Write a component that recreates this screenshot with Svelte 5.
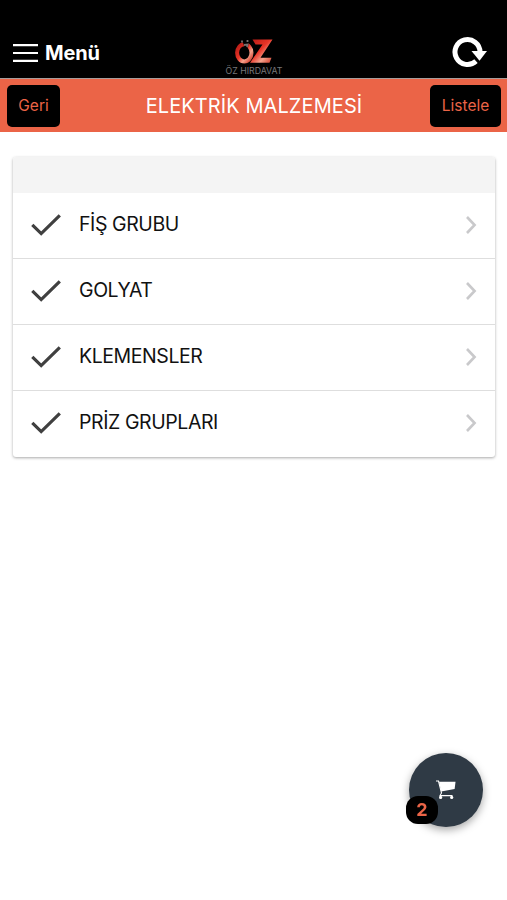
<script>
  const groups = ['FİŞ GRUBU', 'GOLYAT', 'KLEMENSLER', 'PRİZ GRUPLARI'];
  let cartCount = 2;
</script>

<div class="page">
  <header class="topbar">
    <button class="menu-btn">
      <svg width="26" height="20" viewBox="0 0 26 20" fill="none" stroke="#fff" stroke-width="2.2">
        <path d="M0 2.2 H25 M0 10 H25 M0 17.8 H25"/>
      </svg>
      <span>Menü</span>
    </button>
    <svg class="logo" width="64" height="44" viewBox="0 0 64 44" role="img" aria-label="Öz Hırdavat">
      <defs>
        <linearGradient id="red" x1="0" y1="0" x2="1" y2="1">
          <stop offset="0" stop-color="#b51a15"/>
          <stop offset="0.45" stop-color="#e93527"/>
          <stop offset="0.7" stop-color="#f3a28c"/>
          <stop offset="1" stop-color="#cf3222"/>
        </linearGradient>
      </defs>
      <ellipse cx="22.3" cy="18.8" rx="7.2" ry="8.6" fill="none" stroke="url(#red)" stroke-width="4"/>
      <path d="M20 5.5 L27 5 L26 13.5 L22.5 13.5 Z" fill="#000"/>
      <path d="M20 6.5 V8.5 M25.5 6 V8 M22 11 L25.5 10.5 L25 13" stroke="#77706f" stroke-width="1.8" fill="none"/>
      <path d="M30.5 5.5 H50.5 L38.5 23.8 H49.5 L47.5 28.8 H28 L40.5 10.5 H33.5 Z" fill="url(#red)"/>
      <text x="3.5" y="39.5" textLength="57" lengthAdjust="spacingAndGlyphs">ÖZ HIRDAVAT</text>
    </svg>
    <button class="refresh-btn" aria-label="Yenile">
      <svg width="36" height="34" viewBox="0 0 36 34">
        <path d="M29 17 A12.5 12.5 0 1 0 25 26.2" fill="none" stroke="#fff" stroke-width="5"/>
        <path d="M20.5 16 H36 L28.5 25.8 Z" fill="#fff"/>
      </svg>
    </button>
  </header>

  <div class="titlebar">
    <button class="action back">Geri</button>
    <h1>ELEKTRİK MALZEMESİ</h1>
    <button class="action list-btn">Listele</button>
  </div>

  <main class="card">
    <div class="card-header"></div>
    <ul>
      {#each groups as group}
        <li>
          <svg class="check" width="30" height="24" viewBox="0 0 30 24" fill="none" stroke="#404040" stroke-width="3.2">
            <path d="M1.3 11.8 L10.2 20.6 L28.8 2.3"/>
          </svg>
          <span class="name">{group}</span>
          <svg class="chevron" width="12" height="20" viewBox="0 0 12 20" fill="none" stroke="#c9c9cb" stroke-width="2.6">
            <path d="M2 2 L9.6 10 L2 18"/>
          </svg>
        </li>
      {/each}
    </ul>
  </main>

  <button class="cart" aria-label="Sepet">
    <svg width="22" height="20" viewBox="0 0 22 20">
      <path d="M1 1 H3.5 L6.5 13 L5 15.6 H17.5" fill="none" stroke="#fff" stroke-width="1.1"/>
      <path d="M4 1.8 H20.5 L19.6 9 L6.2 11.5 Z" fill="#fff"/>
      <circle cx="5.6" cy="17.4" r="1.6" fill="#fff"/>
      <circle cx="16.7" cy="17.4" r="1.6" fill="#fff"/>
    </svg>
    <span class="badge">{cartCount}</span>
  </button>
</div>

<style>
  :global(body) {
    margin: 0;
    background: #fff;
  }
  .page {
    min-height: 900px;
    font-family: Inter, 'Liberation Sans', sans-serif;
    color: #111;
  }
  button {
    margin: 0;
    padding: 0;
    border: none;
    background: none;
    font-family: inherit;
  }
  svg { display: block; }

  .topbar {
    box-sizing: border-box;
    height: 79px;
    padding: 26px 20px 0 13px;
    display: grid;
    grid-template-columns: 1fr 64px 1fr;
    align-items: center;
    background: #000;
    border-bottom: 1px solid #a79c9b;
  }
  .menu-btn {
    display: flex;
    align-items: center;
    gap: 6px;
    margin-top: 1px;
    color: #fff;
    font-size: 20px;
    font-weight: 700;
    line-height: 24px;
    letter-spacing: -0.15px;
  }
  .logo { margin-left: 4px; margin-top: 7px; }
  .logo text {
    font-size: 8.5px;
    fill: #77777a;
  }
  .refresh-btn { justify-self: end; }

  .titlebar {
    box-sizing: border-box;
    height: 53px;
    padding: 1px 6px 0 7px;
    display: grid;
    grid-template-columns: 71px 1fr 71px;
    align-items: center;
    background: #eb6447;
  }
  h1 {
    margin: 0;
    text-align: center;
    color: #fff;
    font-size: 20px;
    font-weight: 400;
    line-height: 24px;
    letter-spacing: 0.08px;
  }
  .action {
    height: 42px;
    padding-bottom: 2px;
    border-radius: 5px;
    background: #000;
    color: #eb6447;
    font-size: 15.5px;
  }
  .back { width: 53px; }

  .card {
    margin: 25px 12px 0 13px;
    border-radius: 3px;
    overflow: hidden;
    background: #fff;
    box-shadow: 0 1px 3px rgba(0, 0, 0, 0.34);
  }
  .card-header {
    height: 36px;
    background: #f4f4f4;
  }
  ul {
    margin: 0;
    padding: 0;
    list-style: none;
  }
  li {
    box-sizing: border-box;
    height: 66px;
    padding: 0 18px 1px;
    display: flex;
    align-items: center;
    border-bottom: 1px solid #dedede;
  }
  li:last-child {
    padding-bottom: 2px;
    border-bottom: none;
  }
  .name {
    flex: 1;
    margin: -2px 0 0 18px;
    font-size: 19.5px;
    line-height: 24px;
    letter-spacing: -0.42px;
  }

  .cart {
    position: fixed;
    left: 409px;
    top: 753px;
    width: 74px;
    height: 74px;
    display: flex;
    align-items: center;
    justify-content: center;
    border-radius: 50%;
    background: #2f3a45;
    box-shadow: 0 3px 8px rgba(0, 0, 0, 0.35);
  }
  .badge {
    position: absolute;
    left: -3px;
    bottom: 3px;
    width: 32px;
    height: 28px;
    border-radius: 12px;
    background: #000;
    color: #eb6447;
    font-size: 18px;
    font-weight: 700;
    line-height: 28px;
    text-align: center;
  }
</style>
